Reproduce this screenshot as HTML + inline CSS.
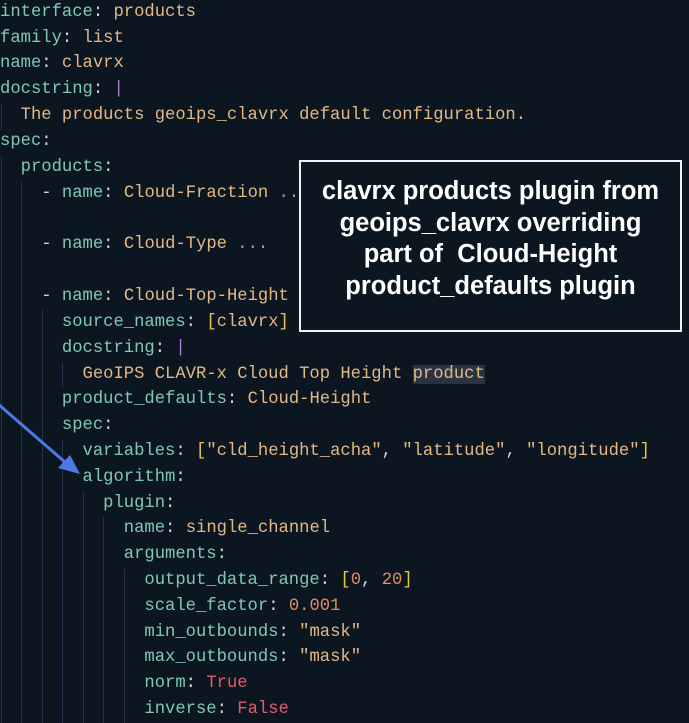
<!DOCTYPE html>
<html><head><meta charset="utf-8"><style>
html,body{margin:0;padding:0;background:#0c1621;width:689px;height:723px;overflow:hidden;position:relative}
.l{position:absolute;left:0;height:26px;line-height:26px;font-family:"Liberation Mono",monospace;font-size:17.2px;white-space:pre;color:#c9d1d9}
.k{color:#7fc8b6}.v{color:#e2b886}.p{color:#d0d6dc}.b{color:#e8c547}.n{color:#e58a62}.r{color:#e45a6c}.pi{color:#b27ad8}.d{color:#9aa3ad}
.hl{background:#2a3440}
.g{position:absolute;width:1px;background:#25304a}
.box{position:absolute;left:299px;top:160px;width:379px;height:154px;border:2px solid #f2f2f2;background:#0c1621;color:#fff;font-family:"Liberation Sans",Arial,sans-serif;font-weight:bold;font-size:25.5px;line-height:31.5px;text-align:center;padding-top:14px;box-sizing:content-box;white-space:nowrap}
#c{position:absolute;left:0;top:3px;width:689px;height:723px}
</style></head><body>
<div id="c">
<div class="g" style="left:1px;top:101px;height:26px"></div>
<div class="g" style="left:1px;top:153px;height:570px"></div>
<div class="g" style="left:21px;top:179px;height:544px"></div>
<div class="g" style="left:42px;top:307px;height:416px"></div>
<div class="g" style="left:62px;top:359px;height:26px"></div>
<div class="g" style="left:62px;top:437px;height:286px"></div>
<div class="g" style="left:83px;top:489px;height:234px"></div>
<div class="g" style="left:103px;top:514px;height:209px"></div>
<div class="g" style="left:124px;top:566px;height:157px"></div>

<div class="l" style="top:-3px"><span class="k">interface</span><span class="p">: </span><span class="v">products</span></div>
<div class="l" style="top:23px"><span class="k">family</span><span class="p">: </span><span class="v">list</span></div>
<div class="l" style="top:48px"><span class="k">name</span><span class="p">: </span><span class="v">clavrx</span></div>
<div class="l" style="top:74px"><span class="k">docstring</span><span class="p">: </span><span class="pi">|</span></div>
<div class="l" style="top:100px"><span class="v">  The products geoips_clavrx default configuration.</span></div>
<div class="l" style="top:126px"><span class="k">spec</span><span class="p">:</span></div>
<div class="l" style="top:152px">  <span class="k">products</span><span class="p">:</span></div>
<div class="l" style="top:178px">    <span class="p">- </span><span class="k">name</span><span class="p">: </span><span class="v">Cloud-Fraction</span><span class="d"> ...</span></div>
<div class="l" style="top:229px">    <span class="p">- </span><span class="k">name</span><span class="p">: </span><span class="v">Cloud-Type</span><span class="d"> ...</span></div>
<div class="l" style="top:281px">    <span class="p">- </span><span class="k">name</span><span class="p">: </span><span class="v">Cloud-Top-Height</span></div>
<div class="l" style="top:307px">      <span class="k">source_names</span><span class="p">: </span><span class="b">[</span><span class="v">clavrx</span><span class="b">]</span></div>
<div class="l" style="top:333px">      <span class="k">docstring</span><span class="p">: </span><span class="pi">|</span></div>
<div class="l" style="top:359px"><span class="v">        GeoIPS CLAVR-x Cloud Top Height <span class="hl">product</span></span></div>
<div class="l" style="top:384px">      <span class="k">product_defaults</span><span class="p">: </span><span class="v">Cloud-Height</span></div>
<div class="l" style="top:410px">      <span class="k">spec</span><span class="p">:</span></div>
<div class="l" style="top:436px">        <span class="k">variables</span><span class="p">: </span><span class="b">[</span><span class="v">"cld_height_acha"</span><span class="p">, </span><span class="v">"latitude"</span><span class="p">, </span><span class="v">"longitude"</span><span class="b">]</span></div>
<div class="l" style="top:462px">        <span class="k">algorithm</span><span class="p">:</span></div>
<div class="l" style="top:488px">          <span class="k">plugin</span><span class="p">:</span></div>
<div class="l" style="top:513px">            <span class="k">name</span><span class="p">: </span><span class="v">single_channel</span></div>
<div class="l" style="top:539px">            <span class="k">arguments</span><span class="p">:</span></div>
<div class="l" style="top:565px">              <span class="k">output_data_range</span><span class="p">: </span><span class="b">[</span><span class="n">0</span><span class="p">, </span><span class="n">20</span><span class="b">]</span></div>
<div class="l" style="top:591px">              <span class="k">scale_factor</span><span class="p">: </span><span class="n">0.001</span></div>
<div class="l" style="top:617px">              <span class="k">min_outbounds</span><span class="p">: </span><span class="v">"mask"</span></div>
<div class="l" style="top:642px">              <span class="k">max_outbounds</span><span class="p">: </span><span class="v">"mask"</span></div>
<div class="l" style="top:668px">              <span class="k">norm</span><span class="p">: </span><span class="r">True</span></div>
<div class="l" style="top:694px">              <span class="k">inverse</span><span class="p">: </span><span class="r">False</span></div>
</div>

<div class="box">clavrx products plugin from<br>geoips_clavrx overriding<br>part of&nbsp; Cloud-Height<br>product_defaults plugin</div>

<svg style="position:absolute;left:0;top:0" width="689" height="723">
<line x1="-2" y1="404" x2="66" y2="463" stroke="#4b79e3" stroke-width="3"/>
<polygon points="80,474 58,468 70,455" fill="#4b79e3"/>
</svg>
</body></html>
